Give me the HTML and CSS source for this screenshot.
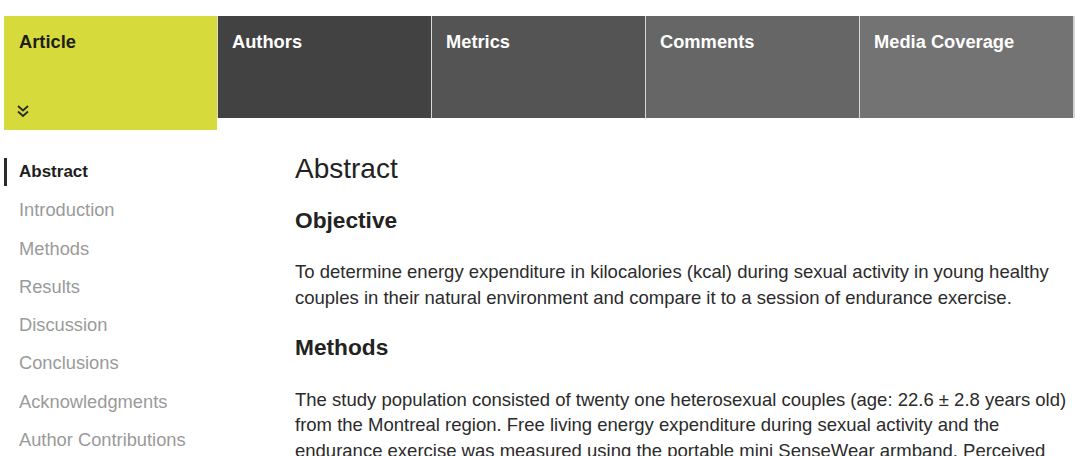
FILE: index.html
```html
<!DOCTYPE html>
<html lang="en">
<head>
<meta charset="utf-8">
<title>Article</title>
<link rel="stylesheet" href="styles.css">
</head>
<body>
<nav class="tabs">
  <a class="tab tab-article" href="#">
    <span class="tab-label">Article</span>
    <svg class="chevrons" width="12" height="13" viewBox="0 0 12 13" aria-hidden="true">
      <polyline points="1,1 6,5.5 11,1" fill="none" stroke="#2a2a2a" stroke-width="1.8"/>
      <polyline points="1,6.5 6,11 11,6.5" fill="none" stroke="#2a2a2a" stroke-width="1.8"/>
    </svg>
  </a>
  <a class="tab tab-authors" href="#"><span class="tab-label">Authors</span></a>
  <a class="tab tab-metrics" href="#"><span class="tab-label">Metrics</span></a>
  <a class="tab tab-comments" href="#"><span class="tab-label">Comments</span></a>
  <a class="tab tab-media" href="#"><span class="tab-label">Media Coverage</span></a>
</nav>
<div class="layout">
  <ul class="toc">
    <li class="toc-item active">Abstract</li>
    <li class="toc-item">Introduction</li>
    <li class="toc-item">Methods</li>
    <li class="toc-item">Results</li>
    <li class="toc-item">Discussion</li>
    <li class="toc-item">Conclusions</li>
    <li class="toc-item">Acknowledgments</li>
    <li class="toc-item">Author Contributions</li>
  </ul>
  <main class="content">
    <h1 class="title">Abstract</h1>
    <h2 class="section first">Objective</h2>
    <p class="para">To determine energy expenditure in kilocalories (kcal) during sexual activity in young healthy couples in their natural environment and compare it to a session of endurance exercise.</p>
    <h2 class="section">Methods</h2>
    <p class="para">The study population consisted of twenty one heterosexual couples (age: 22.6 ± 2.8 years old) from the Montreal region. Free living energy expenditure during sexual activity and the endurance exercise was measured using the portable mini SenseWear armband. Perceived energy expenditure, perceived exertion, and perceived pleasure were also assessed.</p>
  </main>
</div>
</body>
</html>
```
FILE: styles.css
```css
html, body {
  margin: 0;
  padding: 0;
  background: #ffffff;
  font-family: "Liberation Sans", Arial, Helvetica, sans-serif;
  overflow: hidden;
}

.tabs {
  display: flex;
  align-items: flex-start;
  margin-top: 16px;
  padding-left: 4px;
}

.tab {
  display: flex;
  flex-direction: column;
  justify-content: space-between;
  box-sizing: border-box;
  width: 214px;
  height: 102px;
  padding: 15px 0 0 14px;
  border-left: 1px solid #d8d8d8;
  color: #ffffff;
  text-decoration: none;
  font-size: 18.3px;
  font-weight: bold;
  line-height: 22px;
}

.tab-label {
  display: block;
}

.tab-article {
  width: 213px;
  height: 114px;
  padding: 15px 0 12px 15px;
  border-left: 0;
  background: #d6db3b;
  color: #1e1e1e;
}

.chevrons {
  display: block;
  margin-left: -2px;
}

.tab-authors { background: #424242; }
.tab-metrics { background: #545454; }
.tab-comments { background: #666666; }
.tab-media {
  background: #737373;
  border-right: 2px solid #d4d4d4;
  width: 216px;
}

.layout {
  display: flex;
  align-items: flex-start;
}

.toc {
  list-style: none;
  margin: 0;
  padding: 28px 0 0 4px;
  width: 291px;
  flex-shrink: 0;
}

.toc-item {
  border-left: 3px solid transparent;
  padding-left: 12px;
  height: 28px;
  line-height: 28px;
  margin-bottom: 10.3px;
  font-size: 18.3px;
  color: #9a9a9a;
  white-space: nowrap;
}

.toc-item.active {
  border-left-color: #2a2a2a;
  color: #1e1e1e;
  font-size: 17px;
  font-weight: bold;
}

.content {
  width: 780px;
  padding-top: 22px;
  color: #2b2b2b;
}

.title {
  margin: 0;
  font-size: 28px;
  font-weight: normal;
  line-height: 1.2;
  color: #222222;
}

.section {
  margin: 24px 0 25px;
  font-size: 22.7px;
  font-weight: bold;
  line-height: 1.2;
  color: #222222;
}

.section.first {
  margin-top: 21px;
}

.para {
  margin: 0;
  font-size: 18.5px;
  line-height: 25.8px;
  color: #2b2b2b;
}
```
